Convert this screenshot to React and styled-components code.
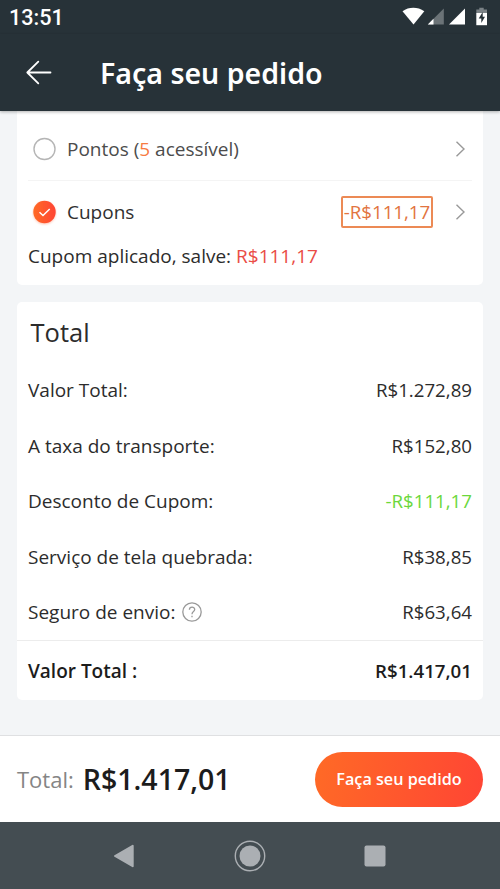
import React from 'react';
import styled, { createGlobalStyle } from 'styled-components';

const GlobalStyle = createGlobalStyle`
    * {
        box-sizing: border-box;
    }
    body {
        margin: 0;
        background: #f3f5f7;
        font-family: 'Open Sans', 'Noto Sans', sans-serif;
        color: #2c2c2c;
    }
`;

const Screen = styled.div`
    display: flex;
    flex-direction: column;
    height: 889px;
    overflow: hidden;
`;

const StatusBar = styled.div`
    display: flex;
    align-items: center;
    justify-content: space-between;
    height: 34px;
    padding: 0 11px 0 9px;
    background: #273238;
`;

const Clock = styled.span`
    font-family: Roboto, sans-serif;
    font-size: 21.6px;
    font-weight: 500;
    color: #fff;
`;

const Header = styled.header`
    display: flex;
    align-items: center;
    height: 77px;
    padding-left: 26px;
    background: #273238;
    box-shadow: 0 1px 3px rgba(0,0,0,.3);
    z-index: 1;
`;

const HeaderTitle = styled.h1`
    margin: 0 0 0 48px;
    font-family: 'Noto Sans', 'Open Sans', sans-serif;
    font-size: 28.5px;
    font-weight: 600;
    line-height: 40px;
    color: #fff;
`;

const Content = styled.main`
    flex: 1;
    padding: 0 17px;
`;

const Card = styled.section`
    background: #fff;
    border-radius: ${({ $flush }) => ($flush ? '0 0 5px 5px' : '5px')};
    padding: ${({ $flush }) => ($flush ? '7px 11px 15px' : '0')};
    margin-bottom: 17px;
`;

const Option = styled.div`
    display: flex;
    align-items: center;
    height: ${({ $line }) => ($line ? '63px' : '62px')};
    padding: 0 7px 0 4px;
    border-bottom: ${({ $line }) => ($line ? '1px solid #f4f4f4' : '0')};
`;

const OptionName = styled.span`
    flex: 1;
    margin-left: 10px;
    font-size: 19px;
    color: ${({ $muted }) => ($muted ? '#4c4c4c' : '#303030')};
`;

const Highlight = styled.span`
    color: ${({ $color }) => $color};
`;

const CouponTag = styled.span`
    width: 92px;
    height: 32px;
    margin-right: 22px;
    border: 2px solid #ec8a55;
    border-radius: 2px;
    font-size: 18.7px;
    line-height: 28px;
    text-align: center;
    color: #e27440;
`;

const CouponNote = styled.p`
    margin: 0;
    font-size: 19px;
    line-height: 27px;
`;

const CardTitle = styled.h2`
    margin: 0;
    padding-left: 13.5px;
    font-size: 25.5px;
    font-weight: 400;
    line-height: 60px;
`;

const Row = styled.div`
    display: flex;
    align-items: center;
    justify-content: space-between;
    height: 55.5px;
    padding: 0 11px;
    font-size: 18.7px;
`;

const SumRow = styled(Row)`
    height: 60px;
    border-top: 1px solid #ececec;
    font-weight: 600;
    color: #1c1c1c;
`;

const Label = styled.span`
    display: flex;
    align-items: center;
    gap: 7px;
    padding-top: 1px;
    font-size: 19px;
`;

const Amount = styled.span`
    color: ${({ $green }) => ($green ? '#6bd83c' : 'inherit')};
`;

const Footer = styled.footer`
    display: flex;
    align-items: center;
    height: 87px;
    padding: 0 17px;
    border-top: 1px solid #dfe0e2;
    background: #fff;
`;

const FooterLabel = styled.span`
    font-size: 22px;
    color: #858585;
`;

const FooterTotal = styled.strong`
    flex: 1;
    margin-left: 9px;
    font-size: 28.5px;
    font-weight: 600;
    color: #1c1c1c;
`;

const OrderButton = styled.button`
    width: 168px;
    height: 55px;
    padding: 0;
    border: 0;
    border-radius: 28px;
    background: linear-gradient(100deg, #ff6a26, #ff4534);
    font-family: inherit;
    font-size: 16.2px;
    font-weight: 600;
    color: #fff;
`;

const NavBar = styled.nav`
    display: flex;
    align-items: center;
    justify-content: center;
    gap: 98px;
    height: 67px;
    background: #444d52;
`;

const StatusIcons = () => (
    <svg width="88" height="20" viewBox="0 0 88 20">
        <path d="M1.5 4.3C8 -.3 16.500 -.3 23.300 4.300L12.500 17.500Z" fill="#fff" />
        <path d="M42.800 1.500V17.500H26.800Z" fill="#6b7377" />
        <path d="M32.500 11.800V17.500H26.800Z" fill="#fff" />
        <path d="M64 1.500V17.500H48Z" fill="#fff" />
        <path d="M78.300 .8H82.700V2.500H86V6H75.300V2.500H78.300Z" fill="#7b8286" />
        <path d="M75.300 6H86V18.200H75.300Z" fill="#fff" />
        <path d="M81.700 5L77.700 11.500H80.300V16L84 9.800H81.700Z" fill="#273238" />
    </svg>
);

const BackArrow = () => (
    <svg width="26" height="26" viewBox="0 0 26 26" fill="none" stroke="#fff" strokeWidth="1.800" strokeLinecap="round" strokeLinejoin="round">
        <path d="M24.500 12.500H1.300M12.300 1.700L1.300 12.500L12.300 23.300" />
    </svg>
);

const Radio = ({ checked }) => (
    <svg width="25" height="28" viewBox="0 0 25 28" fill="none">
        <defs>
            <linearGradient id="radio">
                <stop stopColor="#ff6a26" />
                <stop offset="1" stopColor="#ff4534" />
            </linearGradient>
            <filter id="glow" x="-30%" y="-30%" width="160%" height="160%">
                <feDropShadow dx="0" dy="1" stdDeviation="1" floodColor="#ff6a40" floodOpacity=".4" />
            </filter>
        </defs>
        {checked ? (
            <>
                <circle cx="12.500" cy="14" r="11.200" fill="url(#radio)" filter="url(#glow)" />
                <path d="M7.500 14.200L11 17.500L17.700 11" stroke="#fff" strokeWidth="1.500" />
            </>
        ) : (
            <circle cx="12.500" cy="14" r="10.500" stroke="#b5b5b5" strokeWidth="1.400" />
        )}
    </svg>
);

const Chevron = () => (
    <svg width="10" height="16" viewBox="0 0 10 16" fill="none" stroke="#999" strokeWidth="1.400">
        <path d="M1.500 .8L9 8L1.500 15.200" />
    </svg>
);

const HelpIcon = () => (
    <svg width="20" height="20" viewBox="0 0 20 20" fill="none" stroke="#999" strokeWidth="1.300">
        <circle cx="10" cy="10" r="9.200" />
        <path d="M7.400 7.800C7.400 4.200 12.700 4.300 12.700 7.500C12.700 9.600 10 9.500 10 12.200M10 13.700V15.200" />
    </svg>
);

const BackKey = () => (
    <svg width="22" height="24" viewBox="0 0 22 24">
        <path d="M1 12L18.700 1.800V22.200Z" fill="#abafb3" stroke="#abafb3" strokeWidth="2" strokeLinejoin="round" />
    </svg>
);

const HomeKey = () => (
    <svg width="32" height="32" viewBox="0 0 32 32">
        <circle cx="16" cy="16" r="14.700" fill="none" stroke="#abafb3" strokeWidth="1.400" />
        <circle cx="16" cy="16" r="10.500" fill="#abafb3" />
    </svg>
);

const RecentKey = () => (
    <svg width="22" height="22" viewBox="0 0 22 22">
        <rect x=".5" y=".5" width="21" height="21" rx="2" fill="#abafb3" />
    </svg>
);

const rows = [
    { label: 'Valor Total:', amount: 'R$1.272,89' },
    { label: 'A taxa do transporte:', amount: 'R$152,80' },
    { label: 'Desconto de Cupom:', amount: '-R$111,17', green: true },
    { label: 'Serviço de tela quebrada:', amount: 'R$38,85' },
    { label: 'Seguro de envio:', amount: 'R$63,64', help: true },
];

const App = () => (
    <Screen>
        <GlobalStyle />
        <StatusBar>
            <Clock>13:51</Clock>
            <StatusIcons />
        </StatusBar>
        <Header>
            <BackArrow />
            <HeaderTitle>Faça seu pedido</HeaderTitle>
        </Header>
        <Content>
            <Card $flush>
                <Option $line>
                    <Radio />
                    <OptionName $muted>
                        Pontos (<Highlight $color="#f77b42">5</Highlight> acessível)
                    </OptionName>
                    <Chevron />
                </Option>
                <Option>
                    <Radio checked />
                    <OptionName>Cupons</OptionName>
                    <CouponTag>-R$111,17</CouponTag>
                    <Chevron />
                </Option>
                <CouponNote>
                    Cupom aplicado, salve: <Highlight $color="#ea4c46">R$111,17</Highlight>
                </CouponNote>
            </Card>
            <Card>
                <CardTitle>Total</CardTitle>
                {rows.map(({ label, amount, green, help }) => (
                    <Row key={label}>
                        <Label>
                            {label}
                            {help && <HelpIcon />}
                        </Label>
                        <Amount $green={green}>{amount}</Amount>
                    </Row>
                ))}
                <SumRow>
                    <Label>Valor Total :</Label>
                    <Amount>R$1.417,01</Amount>
                </SumRow>
            </Card>
        </Content>
        <Footer>
            <FooterLabel>Total:</FooterLabel>
            <FooterTotal>R$1.417,01</FooterTotal>
            <OrderButton>Faça seu pedido</OrderButton>
        </Footer>
        <NavBar>
            <BackKey />
            <HomeKey />
            <RecentKey />
        </NavBar>
    </Screen>
);

export default App;
